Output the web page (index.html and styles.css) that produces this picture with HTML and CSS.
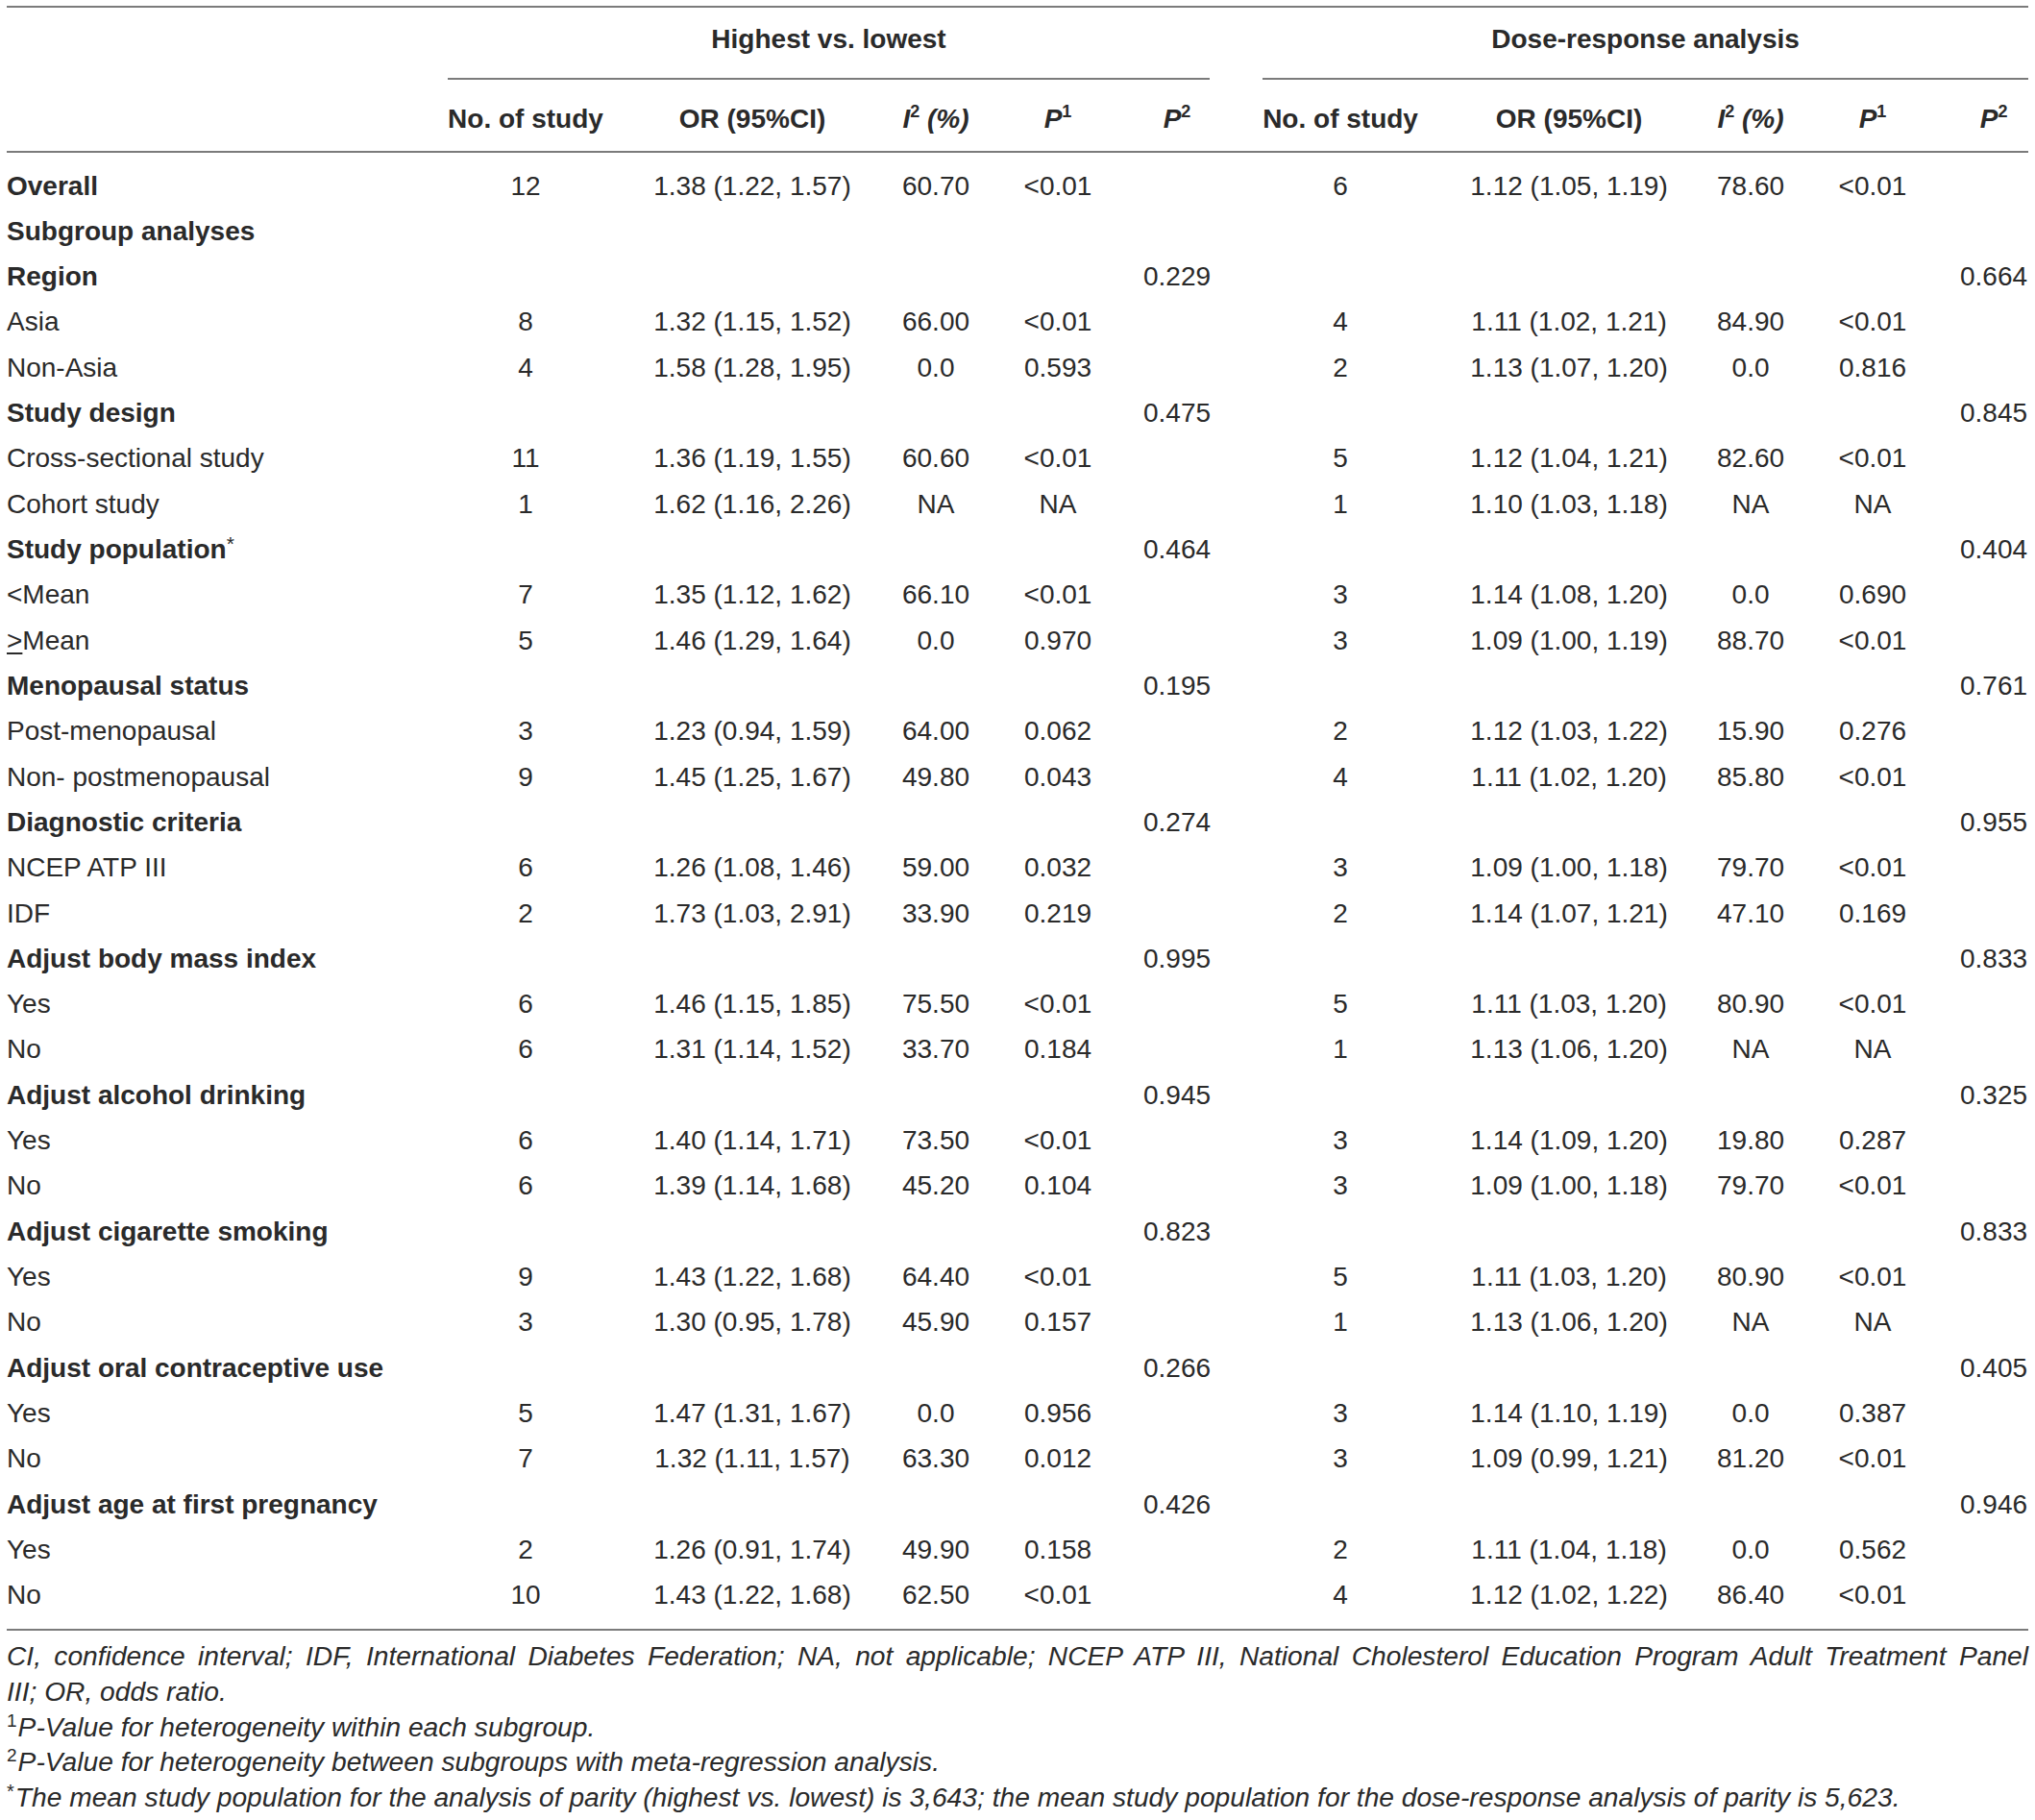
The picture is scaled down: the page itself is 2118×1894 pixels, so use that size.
FILE: index.html
```html
<!DOCTYPE html>
<html lang="en">
<head>
<meta charset="utf-8">
<title>Parity and metabolic syndrome: subgroup analyses</title>
<link rel="stylesheet" href="styles.css">
</head>
<body>
<table class="results">
  <colgroup>
    <col class="c-label">
    <col class="c-n1"><col class="c-or1"><col class="c-i1"><col class="c-p1a"><col class="c-p2a">
    <col class="c-n2"><col class="c-or2"><col class="c-i2"><col class="c-p1b"><col class="c-p2b">
  </colgroup>
  <thead>
    <tr class="group-row">
      <th></th>
      <th colspan="5"><div class="group group-hl">Highest vs. lowest</div></th>
      <th colspan="5"><div class="group group-dr">Dose-response analysis</div></th>
    </tr>
    <tr class="col-row">
      <th></th>
      <th>No. of study</th>
      <th>OR (95%CI)</th>
      <th><i>I</i><sup>2</sup> <i>(%)</i></th>
      <th><i>P</i><sup>1</sup></th>
      <th><i>P</i><sup>2</sup></th>
      <th>No. of study</th>
      <th>OR (95%CI)</th>
      <th><i>I</i><sup>2</sup> <i>(%)</i></th>
      <th><i>P</i><sup>1</sup></th>
      <th class="last"><i>P</i><sup>2</sup></th>
    </tr>
  </thead>
  <tbody>
    <tr class="first"><td class="head">Overall</td><td>12</td><td>1.38 (1.22, 1.57)</td><td>60.70</td><td>&lt;0.01</td><td></td><td>6</td><td>1.12 (1.05, 1.19)</td><td>78.60</td><td>&lt;0.01</td><td class="last"></td></tr>
    <tr><td class="head">Subgroup analyses</td><td></td><td></td><td></td><td></td><td></td><td></td><td></td><td></td><td></td><td class="last"></td></tr>
    <tr><td class="head">Region</td><td></td><td></td><td></td><td></td><td>0.229</td><td></td><td></td><td></td><td></td><td class="last">0.664</td></tr>
    <tr><td>Asia</td><td>8</td><td>1.32 (1.15, 1.52)</td><td>66.00</td><td>&lt;0.01</td><td></td><td>4</td><td>1.11 (1.02, 1.21)</td><td>84.90</td><td>&lt;0.01</td><td class="last"></td></tr>
    <tr><td>Non-Asia</td><td>4</td><td>1.58 (1.28, 1.95)</td><td>0.0</td><td>0.593</td><td></td><td>2</td><td>1.13 (1.07, 1.20)</td><td>0.0</td><td>0.816</td><td class="last"></td></tr>
    <tr><td class="head">Study design</td><td></td><td></td><td></td><td></td><td>0.475</td><td></td><td></td><td></td><td></td><td class="last">0.845</td></tr>
    <tr><td>Cross-sectional study</td><td>11</td><td>1.36 (1.19, 1.55)</td><td>60.60</td><td>&lt;0.01</td><td></td><td>5</td><td>1.12 (1.04, 1.21)</td><td>82.60</td><td>&lt;0.01</td><td class="last"></td></tr>
    <tr><td>Cohort study</td><td>1</td><td>1.62 (1.16, 2.26)</td><td>NA</td><td>NA</td><td></td><td>1</td><td>1.10 (1.03, 1.18)</td><td>NA</td><td>NA</td><td class="last"></td></tr>
    <tr><td class="head">Study population<sup class="ast">*</sup></td><td></td><td></td><td></td><td></td><td>0.464</td><td></td><td></td><td></td><td></td><td class="last">0.404</td></tr>
    <tr><td>&lt;Mean</td><td>7</td><td>1.35 (1.12, 1.62)</td><td>66.10</td><td>&lt;0.01</td><td></td><td>3</td><td>1.14 (1.08, 1.20)</td><td>0.0</td><td>0.690</td><td class="last"></td></tr>
    <tr><td><span class="ge">&gt;</span>Mean</td><td>5</td><td>1.46 (1.29, 1.64)</td><td>0.0</td><td>0.970</td><td></td><td>3</td><td>1.09 (1.00, 1.19)</td><td>88.70</td><td>&lt;0.01</td><td class="last"></td></tr>
    <tr><td class="head">Menopausal status</td><td></td><td></td><td></td><td></td><td>0.195</td><td></td><td></td><td></td><td></td><td class="last">0.761</td></tr>
    <tr><td>Post-menopausal</td><td>3</td><td>1.23 (0.94, 1.59)</td><td>64.00</td><td>0.062</td><td></td><td>2</td><td>1.12 (1.03, 1.22)</td><td>15.90</td><td>0.276</td><td class="last"></td></tr>
    <tr><td>Non- postmenopausal</td><td>9</td><td>1.45 (1.25, 1.67)</td><td>49.80</td><td>0.043</td><td></td><td>4</td><td>1.11 (1.02, 1.20)</td><td>85.80</td><td>&lt;0.01</td><td class="last"></td></tr>
    <tr><td class="head">Diagnostic criteria</td><td></td><td></td><td></td><td></td><td>0.274</td><td></td><td></td><td></td><td></td><td class="last">0.955</td></tr>
    <tr><td>NCEP ATP III</td><td>6</td><td>1.26 (1.08, 1.46)</td><td>59.00</td><td>0.032</td><td></td><td>3</td><td>1.09 (1.00, 1.18)</td><td>79.70</td><td>&lt;0.01</td><td class="last"></td></tr>
    <tr><td>IDF</td><td>2</td><td>1.73 (1.03, 2.91)</td><td>33.90</td><td>0.219</td><td></td><td>2</td><td>1.14 (1.07, 1.21)</td><td>47.10</td><td>0.169</td><td class="last"></td></tr>
    <tr><td class="head">Adjust body mass index</td><td></td><td></td><td></td><td></td><td>0.995</td><td></td><td></td><td></td><td></td><td class="last">0.833</td></tr>
    <tr><td>Yes</td><td>6</td><td>1.46 (1.15, 1.85)</td><td>75.50</td><td>&lt;0.01</td><td></td><td>5</td><td>1.11 (1.03, 1.20)</td><td>80.90</td><td>&lt;0.01</td><td class="last"></td></tr>
    <tr><td>No</td><td>6</td><td>1.31 (1.14, 1.52)</td><td>33.70</td><td>0.184</td><td></td><td>1</td><td>1.13 (1.06, 1.20)</td><td>NA</td><td>NA</td><td class="last"></td></tr>
    <tr><td class="head">Adjust alcohol drinking</td><td></td><td></td><td></td><td></td><td>0.945</td><td></td><td></td><td></td><td></td><td class="last">0.325</td></tr>
    <tr><td>Yes</td><td>6</td><td>1.40 (1.14, 1.71)</td><td>73.50</td><td>&lt;0.01</td><td></td><td>3</td><td>1.14 (1.09, 1.20)</td><td>19.80</td><td>0.287</td><td class="last"></td></tr>
    <tr><td>No</td><td>6</td><td>1.39 (1.14, 1.68)</td><td>45.20</td><td>0.104</td><td></td><td>3</td><td>1.09 (1.00, 1.18)</td><td>79.70</td><td>&lt;0.01</td><td class="last"></td></tr>
    <tr><td class="head">Adjust cigarette smoking</td><td></td><td></td><td></td><td></td><td>0.823</td><td></td><td></td><td></td><td></td><td class="last">0.833</td></tr>
    <tr><td>Yes</td><td>9</td><td>1.43 (1.22, 1.68)</td><td>64.40</td><td>&lt;0.01</td><td></td><td>5</td><td>1.11 (1.03, 1.20)</td><td>80.90</td><td>&lt;0.01</td><td class="last"></td></tr>
    <tr><td>No</td><td>3</td><td>1.30 (0.95, 1.78)</td><td>45.90</td><td>0.157</td><td></td><td>1</td><td>1.13 (1.06, 1.20)</td><td>NA</td><td>NA</td><td class="last"></td></tr>
    <tr><td class="head">Adjust oral contraceptive use</td><td></td><td></td><td></td><td></td><td>0.266</td><td></td><td></td><td></td><td></td><td class="last">0.405</td></tr>
    <tr><td>Yes</td><td>5</td><td>1.47 (1.31, 1.67)</td><td>0.0</td><td>0.956</td><td></td><td>3</td><td>1.14 (1.10, 1.19)</td><td>0.0</td><td>0.387</td><td class="last"></td></tr>
    <tr><td>No</td><td>7</td><td>1.32 (1.11, 1.57)</td><td>63.30</td><td>0.012</td><td></td><td>3</td><td>1.09 (0.99, 1.21)</td><td>81.20</td><td>&lt;0.01</td><td class="last"></td></tr>
    <tr><td class="head">Adjust age at first pregnancy</td><td></td><td></td><td></td><td></td><td>0.426</td><td></td><td></td><td></td><td></td><td class="last">0.946</td></tr>
    <tr><td>Yes</td><td>2</td><td>1.26 (0.91, 1.74)</td><td>49.90</td><td>0.158</td><td></td><td>2</td><td>1.11 (1.04, 1.18)</td><td>0.0</td><td>0.562</td><td class="last"></td></tr>
    <tr class="final"><td>No</td><td>10</td><td>1.43 (1.22, 1.68)</td><td>62.50</td><td>&lt;0.01</td><td></td><td>4</td><td>1.12 (1.02, 1.22)</td><td>86.40</td><td>&lt;0.01</td><td class="last"></td></tr>
  </tbody>
</table>
<div class="notes">
  <p class="note"><span class="note-line1">CI, confidence interval; IDF, International Diabetes Federation; NA, not applicable; NCEP ATP III, National Cholesterol Education Program Adult Treatment Panel</span> III; OR, odds ratio.</p>
  <p class="note"><sup class="fn">1</sup>P-Value for heterogeneity within each subgroup.</p>
  <p class="note"><sup class="fn">2</sup>P-Value for heterogeneity between subgroups with meta-regression analysis.</p>
  <p class="note"><sup class="fn fn-ast">*</sup>The mean study population for the analysis of parity (highest vs. lowest) is 3,643; the mean study population for the dose-response analysis of parity is 5,623.</p>
</div>
</body>
</html>
```

FILE: styles.css
```css
html, body {
  margin: 0;
  padding: 0;
  background: #ffffff;
}

body {
  padding: 6px 7px 0 7px;
  font-family: "Liberation Sans", Arial, Helvetica, sans-serif;
  font-size: 28px;
  color: #2a2a2a;
}

.results {
  width: 2104px;
  table-layout: fixed;
  border-collapse: separate;
  border-spacing: 0;
}

.c-label { width: 422px; }
.c-n1 { width: 236px; }
.c-or1 { width: 236px; }
.c-i1 { width: 146px; }
.c-p1a { width: 108px; }
.c-p2a { width: 140px; }
.c-n2 { width: 200px; }
.c-or2 { width: 276px; }
.c-i2 { width: 102px; }
.c-p1b { width: 152px; }
.c-p2b { width: 86px; }

.results th,
.results td {
  padding: 0;
  text-align: center;
  white-space: nowrap;
  font-weight: normal;
}

.results th:first-child,
.results td:first-child {
  text-align: left;
}

.results .last {
  padding-left: 14px;
}

/* group header row */
.group-row th {
  border-top: 2px solid #7b7b7b;
  vertical-align: top;
}

.group {
  font-weight: bold;
  line-height: 34px;
  padding: 16px 0 23px 0;
  border-bottom: 2px solid #7b7b7b;
}

.group-hl {
  margin: 0 36px 0 37px;
}

.group-dr {
  margin: 0 0 0 19px;
}

/* column header row */
.col-row th {
  font-weight: bold;
  line-height: 34px;
  padding-top: 24px;
  padding-bottom: 16px;
  border-bottom: 2px solid #7b7b7b;
}

.col-row th.last {
  padding-top: 24px;
  padding-bottom: 16px;
}

sup {
  font-size: 18px;
  line-height: 0;
  vertical-align: 10px;
  font-style: normal;
}

.col-row sup {
  font-weight: bold;
  vertical-align: 11px;
}

/* body rows */
.results td {
  line-height: 47.32px;
  height: 47.32px;
}

.results td.head {
  font-weight: bold;
}

.results tr.first td {
  padding-top: 10.5px;
}

.results tr.final td {
  padding-bottom: 11.5px;
  border-bottom: 2px solid #7b7b7b;
}

.ast {
  font-weight: normal;
  font-size: 21px;
  vertical-align: 8px;
}

.ge {
  text-decoration: underline;
  text-underline-offset: 3px;
}

/* footnotes */
.notes {
  padding-top: 8px;
}

.note {
  margin: 0;
  font-style: italic;
  font-size: 28.2px;
  line-height: 36.8px;
}

.note-line1 {
  display: block;
  text-align: justify;
  text-align-last: justify;
}

.fn {
  font-style: normal;
  font-size: 19px;
  vertical-align: 10px;
  margin-right: 1px;
}

.fn-ast {
  font-size: 20px;
  vertical-align: 9px;
}
```
